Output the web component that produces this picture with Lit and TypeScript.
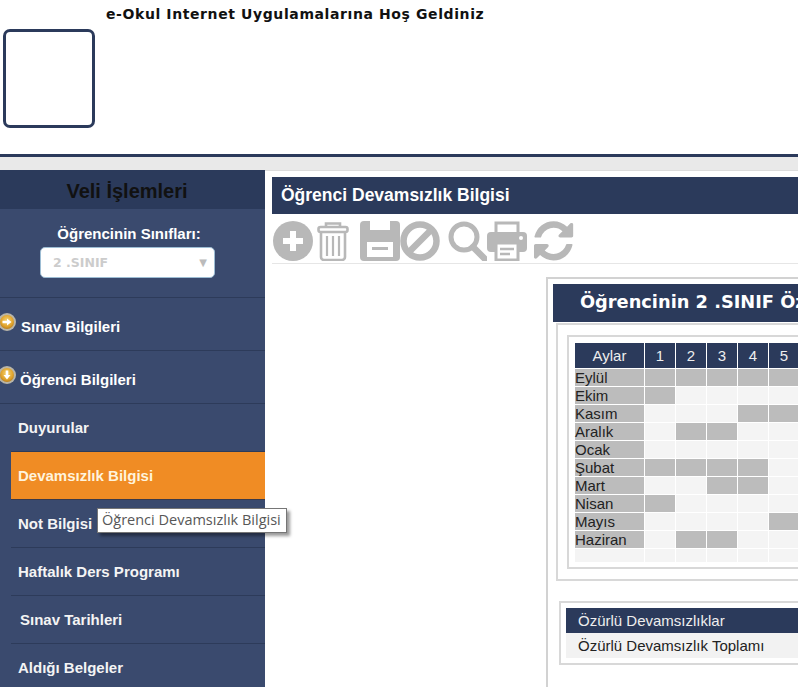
import { LitElement, html, css, svg } from "lit";
import { customElement } from "lit/decorators.js";

const MONTHS: [string, number[]][] = [
  ["Eylül", [1, 2, 3, 4, 5]],
  ["Ekim", [1]],
  ["Kasım", [4, 5]],
  ["Aralık", [2, 3]],
  ["Ocak", []],
  ["Şubat", [1, 2, 3, 4]],
  ["Mart", [3, 4]],
  ["Nisan", [1]],
  ["Mayıs", [5]],
  ["Haziran", [2, 3]],
];
const COLS = [1, 2, 3, 4, 5];

const bullet = (down: boolean) => html`<svg class="bullet" viewBox="0 0 18 18" width="18" height="18">
  <defs><radialGradient id=${down ? "gd" : "gr"} cx="50%" cy="40%" r="60%">
    <stop offset="0%" stop-color="#f6d676"></stop><stop offset="70%" stop-color="#e0a32c"></stop><stop offset="100%" stop-color="#b97f1e"></stop>
  </radialGradient></defs>
  <circle cx="9" cy="9" r="9" fill="#b9b5a8"></circle>
  <circle cx="9" cy="9" r="7" fill="url(#${down ? "gd" : "gr"})"></circle>
  ${down
    ? svg`<path d="M7.7 4.5h2.6v4.5h2.2L9 13.5 5.5 9h2.2z" fill="#fff"></path>`
    : svg`<path d="M4.5 7.7h4.5V5.5L13.5 9 9 12.5v-2.2H4.5z" fill="#fff"></path>`}
</svg>`;

const G = "#b8b8b8";
const icons = {
  plus: svg`<circle cx="20" cy="20" r="20" fill=${G}></circle><path d="M17 10h6v7h7v6h-7v7h-6v-7h-7v-6h7z" fill="#fff"></path>`,
  trash: svg`<g fill="none" stroke=${G} stroke-width="2.6"><path d="M13 6V2.5h14V6"></path><rect x="5.5" y="6" width="29" height="5" rx="2"></rect><path d="M8 11v25a3 3 0 0 0 3 3h18a3 3 0 0 0 3-3V11"></path><path d="M14 15v20M20 15v20M26 15v20" stroke-width="2.2"></path></g>`,
  save: svg`<rect x="0" y="0" width="40" height="40" rx="4" fill=${G}></rect><rect x="10" y="0" width="20" height="9" fill="#fff"></rect><rect x="7" y="21" width="26" height="15" fill="#fff"></rect><rect x="12" y="26" width="16" height="3" fill=${G}></rect>`,
  ban: svg`<circle cx="20" cy="20" r="16.5" fill="none" stroke=${G} stroke-width="6.5"></circle><path d="M9 31 31 9" stroke=${G} stroke-width="6.5"></path>`,
  search: svg`<circle cx="17" cy="16" r="13" fill="none" stroke=${G} stroke-width="5"></circle><path d="M26 26 38 38" stroke=${G} stroke-width="6.5" stroke-linecap="round"></path>`,
  print: svg`<path d="M9 12V2h22v10" fill="none" stroke=${G} stroke-width="3"></path><rect x="0" y="11" width="40" height="20" rx="4" fill=${G}></rect><circle cx="34" cy="17" r="2" fill="#fff"></circle><rect x="9" y="22" width="22" height="17" fill="#fff" stroke=${G} stroke-width="3"></rect><path d="M13 28h14M13 33h10" stroke=${G} stroke-width="2.5"></path>`,
  refresh: svg`<path transform="scale(0.0255) translate(0 10)" fill=${G} d="M1511 928q0 5-1 7-64 268-268 434.5t-478 166.5q-146 0-282.5-55t-243.5-157l-129 129q-19 19-45 19t-45-19-19-45v-448q0-26 19-45t45-19h448q26 0 45 19t19 45-19 45l-137 137q71 66 161 102t187 36q134 0 250-65t186-179q11-17 53-117 8-23 30-23h192q13 0 22.5 9.5t9.5 22.5zm25-800v448q0 26-19 45t-45 19h-448q-26 0-45-19t-19-45 19-45l138-138q-148-137-349-137-134 0-250 65t-186 179q-11 17-53 117-8 23-30 23h-199q-13 0-22.5-9.5t-9.5-22.5v-7q65-268 270-434.5t480-166.5q146 0 284 55.5t245 156.5l130-129q19-19 45-19t45 19 19 45z"></path>`,
};
const icon = (c: unknown) => html`<svg viewBox="0 0 40 40" width="40" height="40">${c}</svg>`;

@customElement("app-root")
export class AppRoot extends LitElement {
  static styles = css`
    :host { display: block; position: relative; width: 798px; height: 687px; overflow: hidden; background: #fff; font-family: "Liberation Sans", Arial, sans-serif; color: #222; }
    .top { display: flex; align-items: flex-start; height: 154px; border-bottom: 3px solid #2b3a5b; box-sizing: content-box; }
    .logo { width: 92px; height: 99px; box-sizing: border-box; margin: 29px 0 0 3px; border: 3px solid #2b3a5b; border-radius: 7px; background: #fff; flex: none; }
    .welcome { margin: 5px 0 0 11px; font: bold 14px/18px "DejaVu Sans", Verdana, sans-serif; letter-spacing: 0.6px; color: #111; white-space: nowrap; }
    .band { height: 13px; background: #e9e9e9; }
    .main { display: grid; grid-template-columns: 265px 533px; height: 517px; overflow: hidden; }

    .side { background: #3a4a6e; color: #fff; }
    .side-title { height: 39px; background: #2b3a5b; color: #111; font-size: 20px; font-weight: bold; line-height: 42px; text-align: center; padding-right: 11px; }
    .class-box { height: 89px; box-sizing: border-box; border-bottom: 1px solid #2d3b5a; padding: 16px 0 0 40px; }
    .class-label { width: 178px; text-align: center; font-size: 15px; font-weight: bold; line-height: 18px; }
    .select { display: flex; justify-content: space-between; align-items: center; margin-top: 4px; width: 175px; height: 31px; box-sizing: border-box; background: #fff; border: 1px solid #9dbdd4; border-radius: 5px; padding: 0 7px 0 12px; color: #ccc; font: bold 12.5px "DejaVu Sans", Verdana, sans-serif; }
    .arrow { color: #bbb; font-size: 10px; font-family: "DejaVu Sans", sans-serif; font-weight: normal; }
    .group { display: flex; align-items: flex-start; height: 53px; box-sizing: border-box; border-bottom: 1px solid #2d3b5a; font-size: 15px; font-weight: bold; }
    .bullet { flex: none; margin: 15px 0 0 -2px; }
    .group span { margin: 20px 0 0 5px; line-height: 18px; }
    .group.open span { margin-left: 4px; }
    .sub { margin-left: 11px; height: 48px; box-sizing: border-box; border-bottom: 1px solid #2d3b5a; padding: 15px 0 0 7px; font-size: 15px; font-weight: bold; line-height: 18px; color: #f4f4f4; }
    .sub.active { background: #f08c24; color: #fff3dc; border-bottom-color: #3a3a4a; }
    .sub.nudge { padding-left: 9px; }
    .sub.last { border-bottom: 0; }

    .content { border-top: 1px solid #dcdcdc; padding: 6px 0 0 7px; overflow: hidden; }
    .page-title { height: 37px; background: #2b3a5b; color: #fff; font-size: 17.5px; font-weight: bold; line-height: 37px; padding-left: 9px; white-space: nowrap; }
    .tools { display: flex; align-items: flex-start; gap: 7px; height: 50px; box-sizing: border-box; padding: 7px 0 0 1px; border-bottom: 1px solid #e6e6e6; }
    .pair { display: flex; }
    .panel { margin: 13px 0 0 274px; width: 320px; height: 420px; box-sizing: border-box; border: 2px solid #d2d2d2; border-right: 0; padding: 5px 0 0 5px; }
    .panel-title { height: 38px; background: #2b3a5b; color: #fff; font: bold 17.8px/36px "DejaVu Sans", Verdana, sans-serif; padding-left: 27px; white-space: nowrap; overflow: hidden; }
    .outer { margin: 1px 0 0 3px; height: 258px; box-sizing: border-box; border: 2px solid #d8d8d8; border-right: 0; padding: 10px 0 0 9px; }
    .inner { height: 234px; box-sizing: border-box; border: 2px solid #d8d8d8; border-right: 0; padding: 5px 0 0 5px; }
    table { border-collapse: separate; border-spacing: 1px; table-layout: fixed; font-size: 15px; }
    th { height: 25px; padding: 0; background: #2b3a5b; color: #eee; font-weight: normal; text-align: center; }
    th.m { width: 69px; }
    th.n { width: 30px; }
    td { height: 17px; padding: 0; background: #f4f4f4; line-height: 17px; color: #222; }
    td.m { background: #bcbcbc; }
    td.on { background: #bcbcbc; }
    tr.tail td { height: 13px; background: #f4f4f4; }
    .excused { margin: 20px 0 0 6px; height: 64px; box-sizing: border-box; border: 2px solid #d8d8d8; border-right: 0; padding: 5px 0 0 5px; }
    .ex-head { height: 25px; background: #2b3a5b; color: #eee; font-size: 15px; line-height: 25px; padding-left: 12px; }
    .ex-row { height: 25px; background: #f2f2f2; color: #222; font-size: 15px; line-height: 25px; padding-left: 12px; }

    .tip { position: absolute; left: 97px; top: 508px; width: 190px; height: 25px; box-sizing: border-box; border: 1px solid #767676; background: #fff; color: #575757; font: 14.5px/22px "Open Sans", "Noto Sans", sans-serif; padding-left: 4px; white-space: nowrap; box-shadow: 3px 3px 3px rgba(0, 0, 0, 0.4); }
  `;

  render() {
    return html`
      <div class="top">
        <div class="logo"></div>
        <div class="welcome">e-Okul Internet Uygulamalarına Hoş Geldiniz</div>
      </div>
      <div class="band"></div>
      <div class="main">
        <nav class="side">
          <div class="side-title">Veli İşlemleri</div>
          <div class="class-box">
            <div class="class-label">Öğrencinin Sınıfları:</div>
            <div class="select"><b>2 .SINIF</b><span class="arrow">▼</span></div>
          </div>
          <div class="group">${bullet(false)}<span>Sınav Bilgileri</span></div>
          <div class="group open">${bullet(true)}<span>Öğrenci Bilgileri</span></div>
          <div class="sub">Duyurular</div>
          <div class="sub active">Devamsızlık Bilgisi</div>
          <div class="sub">Not Bilgisi</div>
          <div class="sub">Haftalık Ders Programı</div>
          <div class="sub nudge">Sınav Tarihleri</div>
          <div class="sub last">Aldığı Belgeler</div>
        </nav>
        <section class="content">
          <div class="page-title">Öğrenci Devamsızlık Bilgisi</div>
          <div class="tools">
            <div class="pair">${icon(icons.plus)}${icon(icons.trash)}</div>
            <div class="pair">${icon(icons.save)}${icon(icons.ban)}</div>
            <div class="pair">${icon(icons.search)}${icon(icons.print)}</div>
            <div class="pair">${icon(icons.refresh)}</div>
          </div>
          <div class="panel">
            <div class="panel-title">Öğrencinin 2 .SINIF Öz</div>
            <div class="outer">
              <div class="inner">
                <table>
                  <tr><th class="m">Aylar</th>${COLS.map((c) => html`<th class="n">${c}</th>`)}</tr>
                  ${MONTHS.map(
                    ([name, on]) => html`<tr><td class="m">${name}</td>${COLS.map((c) => html`<td class=${on.includes(c) ? "on" : ""}></td>`)}</tr>`
                  )}
                  <tr class="tail"><td></td>${COLS.map(() => html`<td></td>`)}</tr>
                </table>
              </div>
            </div>
            <div class="excused">
              <div class="ex-head">Özürlü Devamsızlıklar</div>
              <div class="ex-row">Özürlü Devamsızlık Toplamı</div>
            </div>
          </div>
        </section>
      </div>
      <div class="tip">Öğrenci Devamsızlık Bilgisi</div>
    `;
  }
}
